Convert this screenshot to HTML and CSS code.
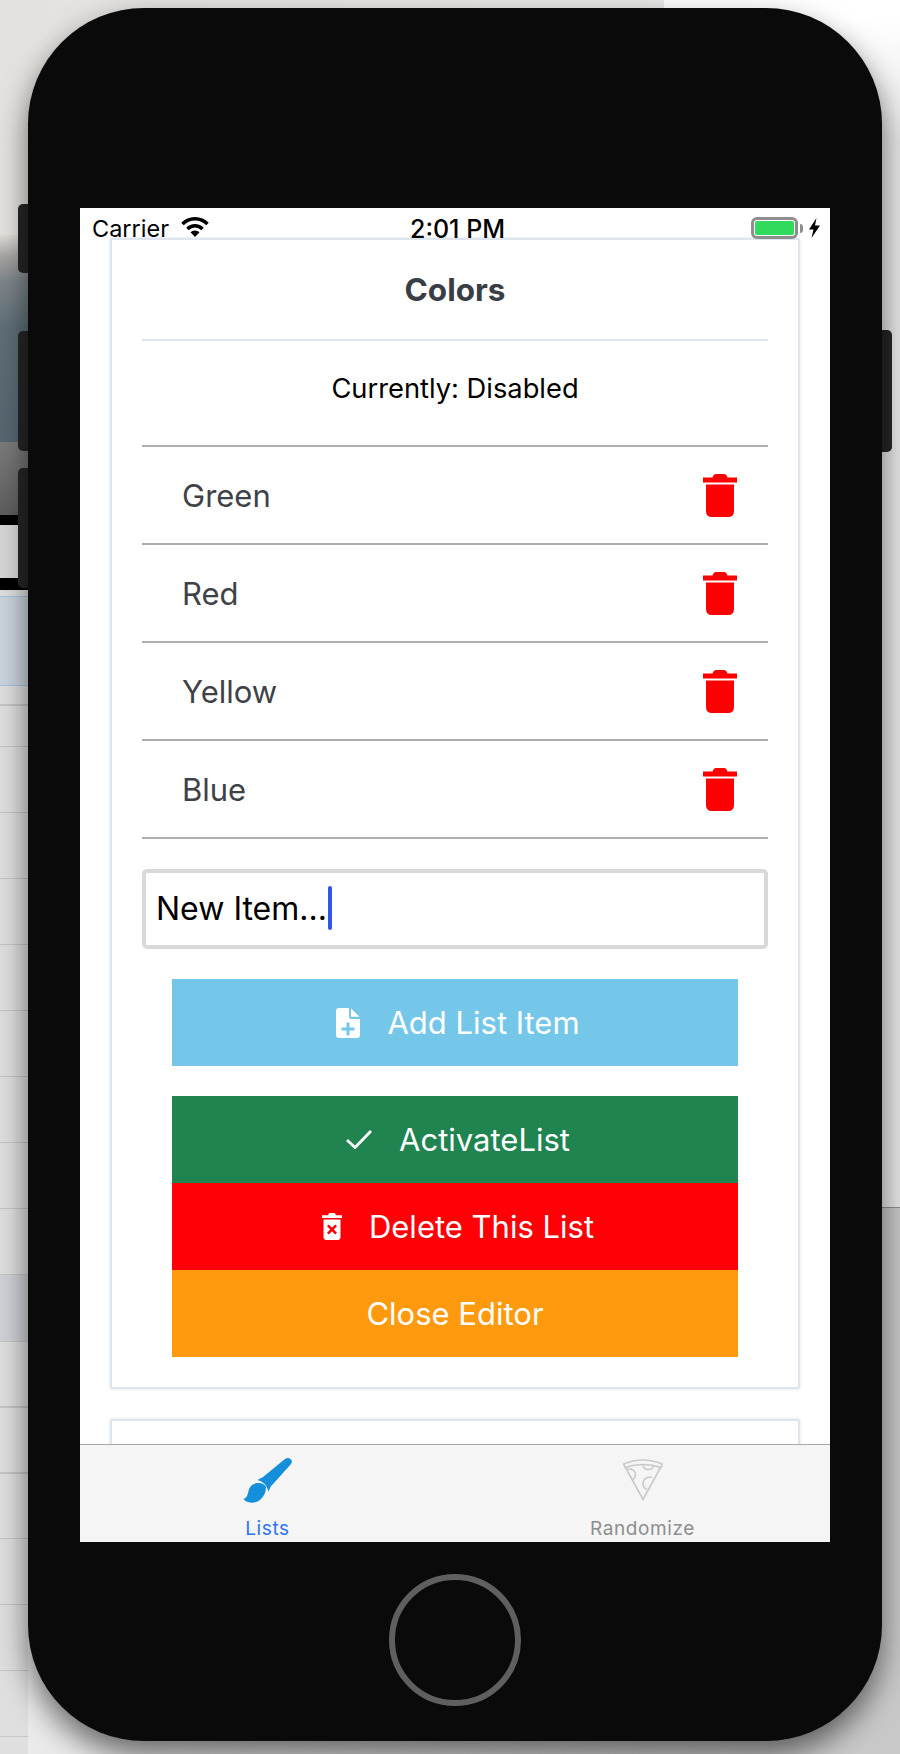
FILE: index.html
```html
<!DOCTYPE html>
<html lang="en">
<head>
<meta charset="utf-8">
<title>Colors</title>
<link rel="stylesheet" href="styles.css">
</head>
<body>
<div class="desktop">
  <div class="win win-top"></div>
  <div class="win win-right"></div>
  <div class="win win-photo"></div>
  <div class="win win-gray"></div>
  <div class="win win-bar"></div>
  <div class="win win-list"><div class="sel-a"></div><div class="sel-b"></div></div>

  <div class="side side-l1"></div>
  <div class="side side-l2"></div>
  <div class="side side-l3"></div>
  <div class="side side-r"></div>

  <div class="phone">
    <div class="screen">
      <div class="status">
        <div class="status-left">
          <span class="carrier">Carrier</span>
          <svg class="wifi" viewBox="0 0 28 20"><path class="wifi-arc" d="M1.5 7A17.5 17.5 0 0 1 26.500 7"/><path class="wifi-arc" d="M6.500 12A10.500 10.500 0 0 1 21.500 12"/><path class="wifi-fill" d="M14 20L9.500 15.200A6.500 6.500 0 0 1 18.500 15.200Z"/></svg>
        </div>
        <span class="clock">2:01 PM</span>
        <div class="status-right">
          <div class="battery"><div class="battery-fill"></div></div>
          <div class="battery-nub"></div>
          <svg class="bolt" viewBox="0 0 11 20"><path class="bolt-fill" d="M7.500 0L0 11.500H4.500L2.500 20L11 7.500H6Z"/></svg>
        </div>
      </div>

      <div class="scroll">
        <section class="card">
          <h1 class="title">Colors</h1>
          <p class="state">Currently: Disabled</p>
          <ul class="items">
            <li class="item"><span>Green</span><svg class="trash" viewBox="0 0 34 43"><path class="red" d="M0 3.500H9.500Q10.500 0 13 0H21Q23.500 0 24.500 3.500H34V8.500H0ZM3 10.500H31V37Q31 43 25 43H9Q3 43 3 37Z"/></svg></li>
            <li class="item"><span>Red</span><svg class="trash" viewBox="0 0 34 43"><path class="red" d="M0 3.500H9.500Q10.500 0 13 0H21Q23.500 0 24.500 3.500H34V8.500H0ZM3 10.500H31V37Q31 43 25 43H9Q3 43 3 37Z"/></svg></li>
            <li class="item"><span>Yellow</span><svg class="trash" viewBox="0 0 34 43"><path class="red" d="M0 3.500H9.500Q10.500 0 13 0H21Q23.500 0 24.500 3.500H34V8.500H0ZM3 10.500H31V37Q31 43 25 43H9Q3 43 3 37Z"/></svg></li>
            <li class="item"><span>Blue</span><svg class="trash" viewBox="0 0 34 43"><path class="red" d="M0 3.500H9.500Q10.500 0 13 0H21Q23.500 0 24.500 3.500H34V8.500H0ZM3 10.500H31V37Q31 43 25 43H9Q3 43 3 37Z"/></svg></li>
          </ul>
          <div class="field"><span>New Item...</span><i class="caret"></i></div>
          <div class="btn btn-icon btn-blue">
            <svg class="ic-file" viewBox="0 0 24 30"><path class="white" fill-rule="evenodd" d="M3 0H13V9Q13 11 15 11H24V27Q24 30 21 30H3Q0 30 0 27V3Q0 0 3 0ZM10.500 14.500V19.500H5.500V22.500H10.500V27.500H13.500V22.500H18.500V19.500H13.500V14.500ZM15 0.500L23.500 8.800H15Z"/></svg>
            <span>Add List Item</span>
          </div>
          <div class="stack">
            <div class="btn btn-icon btn-green">
              <svg class="ic-check" viewBox="0 0 26 19"><path class="check" d="M1 10L9 17.500L25 1"/></svg>
              <span>ActivateList</span>
            </div>
            <div class="btn btn-icon btn-red">
              <svg class="ic-trash" viewBox="0 0 20 27"><path class="white" fill-rule="evenodd" d="M0 2.200H6Q6.500 0 8 0H12Q13.500 0 14 2.200H20V5H0ZM1.500 6.500H18.500V24Q18.500 27 15.500 27H4.500Q1.500 27 1.500 24ZM6.800 11.500L5 13.300L8.200 16.500L5 19.700L6.800 21.500L10 18.300L13.200 21.500L15 19.700L11.800 16.500L15 13.300L13.200 11.500L10 14.700Z"/></svg>
              <span>Delete This List</span>
            </div>
            <div class="btn btn-orange"><span>Close Editor</span></div>
          </div>
        </section>
        <section class="card card-next"></section>
      </div>

      <nav class="tabs">
        <div class="tab tab-on">
          <svg class="ic-brush" viewBox="0 0 49 46"><path class="brush" d="M14.500 23L20 20L42 2Q45 0 47.500 2Q50 4 48 7L31 26L28 29L25.500 34.500Q23 25 14.500 23Z"/><path class="brush" d="M0.500 42Q4 41 5 36Q6 27 14 26Q21 25.500 23 30Q23 38 17 43Q11 47 5 45Q2 44.500 0.500 42Z"/></svg>
          <span>Lists</span>
        </div>
        <div class="tab">
          <svg class="ic-pizza" viewBox="0 0 40 42"><path class="pz" d="M0.800 5Q20 -3 39.200 5L38 8.500Q20 2.500 2 8.500ZM2.500 8.500L20 40.500L37.500 8.500"/><path class="pz" d="M20 6.500A5.500 5.500 0 0 0 30.500 6.800M4.500 10.500A5 5 0 0 1 9 21M29 18.500A6 6 0 0 0 24 30.500"/></svg>
          <span>Randomize</span>
        </div>
      </nav>
    </div>
    <div class="home-area"><div class="home"></div></div>
  </div>
</div>
</body>
</html>
```
FILE: styles.css
```css
* { box-sizing: border-box; }
html, body { margin: 0; padding: 0; }
body { font-family: Inter, "Noto Sans", sans-serif; }

.desktop {
  position: relative;
  width: 900px;
  height: 1754px;
  overflow: hidden;
  background: linear-gradient(90deg, #ececec 0, #c8c8c8 100%);
}

.win { position: absolute; }
.win-top { left: 0; top: 0; width: 664px; height: 245px; background: linear-gradient(90deg, #e4e2df, #e8e8e6); }
.win-right { left: 664px; top: 0; width: 236px; height: 1208px; background: linear-gradient(180deg, #fff 0, #fff 20px, #e6e6e6 140px); border-bottom: 1px solid #8f8f8f; }
.win-photo { left: 0; top: 235px; width: 28px; height: 207px; background: linear-gradient(180deg, #e0ddd9 0, #a9a6a3 10%, #7f878b 22%, #5f6e77 45%, #566670 100%); }
.win-gray { left: 0; top: 442px; width: 28px; height: 73px; background: linear-gradient(180deg, #7c7c7c, #5d5d5d); }
.win-bar { left: 0; top: 515px; width: 28px; height: 75px; background: #d6d6d6; border-top: 10px solid #000; border-bottom: 12px solid #000; }
.win-list {
  left: 0; top: 590px; width: 28px; height: 1164px;
  background: repeating-linear-gradient(180deg, #dfdfdf 0, #dfdfdf 23px, #c6c4c8 23px, #c6c4c8 24.500px, #dfdfdf 24.500px, #dfdfdf 66px);
  background-position: 0 133px;
}
.sel-a { height: 90px; margin-top: 6px; background: #cbd4de; border-top: 1px solid #aac2de; border-bottom: 1px solid #aac2de; }
.sel-b { height: 66px; margin-top: 589px; background: #cfd2d6; }

.side { position: absolute; background: #262626; }
.side-l1 { left: 18px; top: 204px; width: 14px; height: 69px; border-radius: 5px 0 0 5px; }
.side-l2 { left: 18px; top: 331px; width: 14px; height: 120px; border-radius: 5px 0 0 5px; }
.side-l3 { left: 18px; top: 468px; width: 14px; height: 120px; border-radius: 5px 0 0 5px; }
.side-r { left: 878px; top: 330px; width: 14px; height: 122px; border-radius: 0 5px 5px 0; }

.phone {
  position: absolute;
  left: 28px;
  top: 8px;
  width: 854px;
  height: 1733px;
  padding: 200px 52px 0;
  background: #0a0a0a;
  border-radius: 116px;
  box-shadow: 0 14px 30px rgba(0, 0, 0, 0.55);
  display: flex;
  flex-direction: column;
}

.screen {
  position: relative;
  height: 1334px;
  flex: none;
  display: flex;
  flex-direction: column;
  background: #fff;
  overflow: hidden;
}

.status {
  position: absolute;
  z-index: 2;
  left: 0; right: 0; top: 0;
  height: 40px;
  padding: 9px 10px 0 12px;
  display: flex;
  justify-content: space-between;
  align-items: flex-start;
  color: #000;
}
.status-left { display: flex; align-items: flex-start; width: 270px; }
.carrier { font-size: 23.500px; line-height: 22px; margin-top: 1px; }
.wifi { width: 28px; height: 20px; margin-left: 12px; }
.wifi-arc { fill: none; stroke: #000; stroke-width: 3.500; }
.wifi-fill { fill: #000; }
.clock { position: absolute; left: 330px; top: 10px; font-size: 25px; line-height: 22px; font-weight: 500; }
.status-right { display: flex; align-items: center; }
.battery { width: 47px; height: 22px; border: 3px solid #8e8e8e; border-radius: 6px; padding: 1px; }
.battery-fill { height: 100%; background: #31d95c; border-radius: 2px; }
.battery-nub { width: 3px; height: 9px; margin-left: 2px; background: #8e8e8e; border-radius: 0 3px 3px 0; }
.bolt { width: 11px; height: 20px; margin-left: 6px; }
.bolt-fill { fill: #000; }

.scroll { flex: 1; min-height: 0; overflow: hidden; padding: 30px 30px 0; }

.card {
  background: #fff;
  border: 2px solid #dde6ee;
  border-radius: 3px;
  padding: 0 30px 30px;
  box-shadow: 0 0 3px rgba(180, 190, 200, 0.5);
}
.card-next { margin-top: 30px; height: 100px; }

.title {
  margin: 0;
  height: 101px;
  border-bottom: 2px solid #dde6ee;
  display: flex;
  align-items: center;
  justify-content: center;
  font-size: 31.500px;
  font-weight: 700;
  color: #393e44;
}
.state {
  margin: 0;
  height: 104px;
  padding-bottom: 9px;
  display: flex;
  align-items: center;
  justify-content: center;
  font-size: 27.300px;
  color: #000;
}

.items { list-style: none; margin: 0; padding: 0; border-top: 2px solid #aeaeae; }
.item {
  height: 98px;
  border-bottom: 2px solid #aeaeae;
  padding: 1px 31px 0 40px;
  display: flex;
  align-items: center;
  justify-content: space-between;
  font-size: 31px;
  color: #3e4246;
}
.trash { width: 34px; height: 43px; margin-top: -1px; }
.red { fill: #ff0000; }
.white { fill: #fff; }

.field {
  margin-top: 30px;
  height: 80px;
  border: 4px solid #d9d9d9;
  border-radius: 5px;
  padding: 0 0 2px 10px;
  display: flex;
  align-items: center;
  font-size: 32px;
  color: #000;
}
.caret { width: 4px; height: 44px; margin-left: 1px; background: #2f55ee; border-radius: 2px; }

.btn {
  height: 87px;
  display: flex;
  align-items: center;
  justify-content: center;
  gap: 27px;
  font-size: 31px;
  color: #fff;
}
.btn-icon { padding-left: 6px; }
.btn-blue { margin: 30px 30px 0; background: #74c7e9; }
.btn-green { background: #1f8450; }
.btn-red { background: #ff0007; }
.btn-orange { background: #ff9a0e; }
.stack { margin: 30px 30px 0; }

.ic-file { width: 24px; height: 30px; }
.ic-check { width: 26px; height: 19px; }
.check { fill: none; stroke: #fff; stroke-width: 2.800; }
.ic-trash { width: 20px; height: 27px; }

.tabs {
  position: relative;
  z-index: 1;
  flex: none;
  height: 98px;
  background: #f5f5f5;
  border-top: 1px solid #a8a8a8;
  display: flex;
}
.tab {
  flex: 1;
  padding-top: 12px;
  display: flex;
  flex-direction: column;
  align-items: center;
  font-size: 19px;
  letter-spacing: 0.600px;
  color: #8e8e8e;
}
.tab span { margin-top: 15px; line-height: 22px; }
.tab-on { color: #2f74ee; }
.tab svg { display: block; }
.ic-brush { width: 49px; height: 46px; }
.brush { fill: #148fdc; }
.ic-pizza { width: 40px; height: 42px; margin-top: 2px; margin-bottom: 2px; }
.pz { fill: none; stroke: #c9c9c9; stroke-width: 1.600; }

.home-area { flex: 1; display: flex; justify-content: center; padding-top: 32px; }
.home { width: 132px; height: 132px; border: 6px solid #5f5f5f; border-radius: 50%; }
```
